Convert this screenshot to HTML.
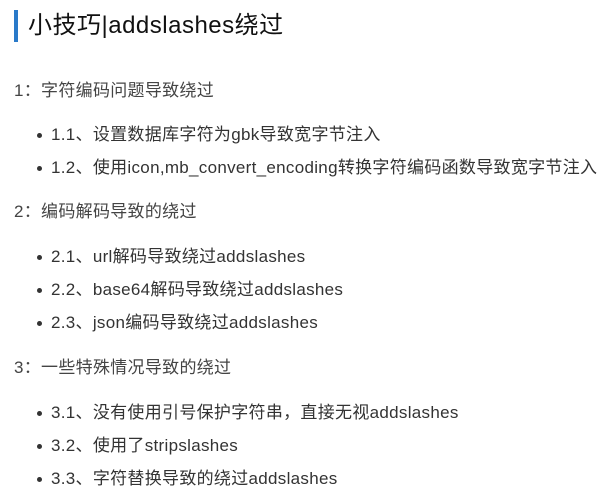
<!DOCTYPE html>
<html><head><meta charset="utf-8"><style>
body{margin:0;background:#fff;font-family:"Liberation Sans","Noto Sans CJK SC",sans-serif;}
.t{position:absolute;left:14px;top:10px;height:32px;border-left:4px solid #2a7ac9;padding-left:10px;font-size:24px;letter-spacing:0.5px;line-height:32px;color:#111;}
.h{position:absolute;left:14px;font-size:17px;letter-spacing:0.3px;color:#444;line-height:20px;white-space:nowrap;}
.i{position:absolute;left:51px;font-size:17px;letter-spacing:0.3px;color:#333;line-height:20px;white-space:nowrap;}
.i:before{content:"";position:absolute;left:-14px;top:8px;width:5px;height:5px;border-radius:50%;background:#333;}
</style></head><body>
<div class="t">小技巧|addslashes绕过</div>
<div class="h" style="top:81px">1：字符编码问题导致绕过</div>
<div class="i" style="top:125px">1.1、设置数据库字符为gbk导致宽字节注入</div>
<div class="i" style="top:158px">1.2、使用icon,mb_convert_encoding转换字符编码函数导致宽字节注入</div>
<div class="h" style="top:202px">2：编码解码导致的绕过</div>
<div class="i" style="top:247px">2.1、url解码导致绕过addslashes</div>
<div class="i" style="top:280px">2.2、base64解码导致绕过addslashes</div>
<div class="i" style="top:313px">2.3、json编码导致绕过addslashes</div>
<div class="h" style="top:358px">3：一些特殊情况导致的绕过</div>
<div class="i" style="top:403px">3.1、没有使用引号保护字符串，直接无视addslashes</div>
<div class="i" style="top:436px">3.2、使用了stripslashes</div>
<div class="i" style="top:469px">3.3、字符替换导致的绕过addslashes</div>
</body></html>
